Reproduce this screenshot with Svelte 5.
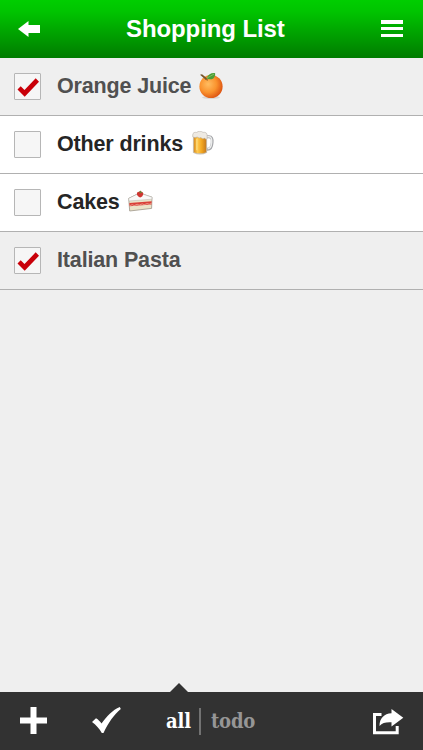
<script>
  const items = [
    { name: 'Orange Juice', done: true, icon: 'orange' },
    { name: 'Other drinks', done: false, icon: 'beer' },
    { name: 'Cakes', done: false, icon: 'cake' },
    { name: 'Italian Pasta', done: true, icon: '' }
  ];
</script>

<div class="app">
  <header>
    <svg class="back" width="24" height="18" viewBox="0 0 24 18"><path d="M0 9 10.5 1v4H22v8H10.5v4Z" fill="#fff" /></svg>
    <h1>Shopping List</h1>
    <svg class="menu" width="22" height="18" viewBox="0 0 22 18"><path d="M0 0h22v4H0zM0 7h22v3H0zM0 14h22v3H0z" fill="#fff" /></svg>
  </header>

  <ul>
    {#each items as item}
      <li class:done={item.done}>
        <span class="box">
          {#if item.done}
            <svg width="25" height="25" viewBox="0 0 25 25"><path d="M2.5 15.5 5.7 12.2 9.5 16 20.7 4.3 24 7.7 9.7 22.8Z" fill="#c90009" /></svg>
          {/if}
        </span>
        <span class="label">{item.name}</span>
        {#if item.icon === 'orange'}
          <svg class="emoji orange" width="26" height="28" viewBox="0 0 26 28">
            <defs><radialGradient id="peel" cx=".38" cy=".4" r=".65"><stop offset="0" stop-color="#ffbd61" /><stop offset=".55" stop-color="#fa932e" /><stop offset="1" stop-color="#dd5311" /></radialGradient></defs>
            <ellipse cx="13" cy="25.5" rx="9" ry="1.5" fill="#d8d5d2" />
            <circle cx="13" cy="14.5" r="11.6" fill="url(#peel)" />
            <path d="M2 2.7 4 2.2 9 6.2l-1 1.7Z" fill="#75542b" />
            <path d="M8.5 6.2c2-4.5 5.7-5.7 8.6-5 .3 1.8-.3 3.7-1.8 5.2-2.2 1.2-4.7 1.1-6.8-.2Z" fill="#4b9d37" />
            <path d="m9 6 7-3.9" stroke="#8fc56a" stroke-width=".8" />
            <path d="m7.3 7.2 3 .2-1 1.4Z" fill="#795321" />
          </svg>
        {:else if item.icon === 'beer'}
          <svg class="emoji beer" width="22" height="25" viewBox="0 0 24 26" preserveAspectRatio="none">
            <defs><linearGradient id="ale"><stop offset="0" stop-color="#d98e20" /><stop offset=".3" stop-color="#ffc94e" /><stop offset=".65" stop-color="#f2a51f" /><stop offset="1" stop-color="#c57b20" /></linearGradient></defs>
            <path d="M14.5 6h4c3 0 3.8 2 3.5 6s-1.9 7-5 7h-2.5" fill="none" stroke="#a6a7aa" stroke-width="3" />
            <path d="M14.5 6h4c2.5 0 3.3 2 3 6s-1.5 6.5-4.5 6.5" fill="none" stroke="#eceded" stroke-width="1.5" />
            <path d="M1 4h15.5v18.5Q9 26.5 1 22.5Z" fill="#c8c2b7" />
            <path d="M2 6h13.5v16Q9 24.5 2 22Z" fill="url(#ale)" />
            <path d="M5.3 8v12" stroke="#ffe287" stroke-width="1.2" />
            <path d="M.8 4C.7 1.8 3 .9 5 1.5 7-.1 10-.1 12 1.4c2.7-.4 5 .7 4.5 3.8V8c-1 .9-2.1.6-2.7-.6-1.8 1-3.2.6-4-.6-1.7.9-3.1.5-4-.7C4.3 7.2 2 6.8.8 6Z" fill="#eeeae3" stroke="#b5aea5" stroke-width=".6" />
          </svg>
        {:else if item.icon === 'cake'}
          <svg class="emoji cake" width="25" height="22" viewBox="0 0 25 22">
            <path d="M.7 8.4 11.5 3 24 7.2l-.4 11.2L1.7 21Z" fill="#ebe3c8" stroke="#9e978a" stroke-width=".8" />
            <path d="M.7 8.4 11.5 3 24 7.2l-.2 2L1 11Z" fill="#f9f9f8" stroke="#b9b5ae" stroke-width=".5" />
            <path d="m1.3 13 22.4-1.8-.2 3.2-22 1.8Z" fill="#da4038" />
            <path d="m1.7 15.7 2.5-1 2 .8 3-1.2 2 .8 3-1.2 2 .8 3-1.2 2 .7 2.3-.8" fill="none" stroke="#f4cdb9" stroke-width=".6" />
            <path d="M8.9 3C10.2 1.1 14.4.9 15.3 3.3c.1 2.3-1.6 4-3.2 4.1-2-.4-3.6-2.4-3.2-4.4Z" fill="#cf3530" />
            <path d="m11 2.2 1.3-1.6 1.2 1.5 1.5.1-2.6 1Z" fill="#688437" />
          </svg>
        {/if}
      </li>
    {/each}
  </ul>

  <main></main>

  <footer>
    <span class="pointer"></span>
    <svg class="plus" width="28" height="28" viewBox="0 0 28 28"><path d="M10.5 0h6v10.5H27v6H16.5V27h-6V16.5H0v-6h10.5Z" fill="#fff" /></svg>
    <svg class="tick" width="30" height="27" viewBox="0 0 30 27"><path d="M0 15 4 11.2c2.3 1.4 4.2 3.2 5.5 5.4C14.5 9.4 20.6 3 27.8 0l1 2C21.9 7.7 16.3 15.8 11.5 26H9.8C7.3 21.7 4 17.7 0 15Z" fill="#fff" /></svg>
    <nav><span class="all">all</span><i></i><span class="todo">todo</span></nav>
    <svg class="share" width="31" height="26" viewBox="0 0 31 26">
      <path d="M8.5 5.5H1.5v18.2h22.7V17" fill="none" stroke="#fff" stroke-width="3" />
      <path d="M18.5 0 30.3 8.8 18.5 17.5V13.2c-5.7-.3-9.2 .6-12 3.7C6.5 9.6 11 4.6 18.5 4.3Z" fill="#fff" />
    </svg>
  </footer>
</div>

<style>
  :global(body) { margin: 0; }
  .app { height: 750px; width: 423px; display: flex; flex-direction: column; background: #efefef; font-family: "Liberation Sans", Arial, sans-serif; overflow: hidden; }
  svg { display: block; flex: none; }
  header { box-sizing: border-box; height: 58px; flex: none; display: flex; align-items: center; padding: 0 20px 0 18px; background: linear-gradient(#00ce00, #00c400 20%, #007c00); }
  .menu { margin: 0 0 0 auto; }
  h1 { margin: 0 0 0 84px; font-size: 24px; line-height: 28px; font-weight: bold; letter-spacing: -0.1px; color: #fff; white-space: nowrap; }
  ul { margin: 0; padding: 0; list-style: none; }
  li { box-sizing: border-box; height: 58px; display: flex; align-items: center; padding-left: 14px; background: #fff; border-bottom: 1px solid #b0b0b0; color: #252525; }
  li.done { background: #efefef; color: #505050; }
  .box { box-sizing: border-box; width: 27px; height: 27px; margin: 0 16px 0 0; border: 1px solid #b6b6b6; border-radius: 1px; background: #f6f6f6; flex: none; }
  .label { font-size: 21.5px; font-weight: bold; line-height: 26px; letter-spacing: -0.15px; margin-top: -2px; }
  .orange { margin: -2px 0 0 7px; }
  .beer { margin: -2px 0 0 9px; }
  .cake { margin: -4px 0 0 8px; }
  main { flex: 1; }
  footer { position: relative; box-sizing: border-box; height: 58px; flex: none; display: flex; align-items: center; background: #323232; padding-left: 20px; }
  .pointer { position: absolute; left: 170px; top: -9px; border: solid transparent; border-width: 0 9px 9px; border-bottom-color: #323232; }
  .tick { margin-left: 44px; margin-top: -1px; }
  nav { display: flex; align-items: center; margin-left: 44px; width: 207px; font: bold 20px/26px "DejaVu Serif Condensed", "DejaVu Serif", serif; color: #fff; }
  nav i { width: 2px; height: 27px; background: #727272; margin: 0 10px 0 8px; }
  .all { width: 25px; letter-spacing: -0.1px; }
  .todo { color: #969696; letter-spacing: -0.2px; }
  .share { margin-top: 1px; }
</style>
